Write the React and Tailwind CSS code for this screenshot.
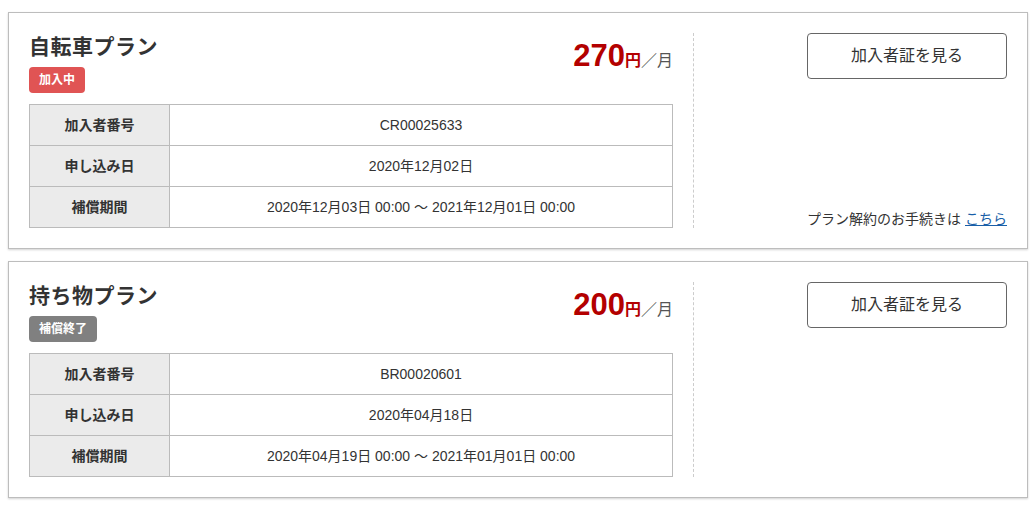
import React from "react";

const plans = [
  {
    name: "自転車プラン",
    status: "加入中",
    active: true,
    price: "270",
    number: "CR00025633",
    applied: "2020年12月02日",
    period: "2020年12月03日 00:00 〜 2021年12月01日 00:00",
  },
  {
    name: "持ち物プラン",
    status: "補償終了",
    active: false,
    price: "200",
    number: "BR00020601",
    applied: "2020年04月18日",
    period: "2020年04月19日 00:00 〜 2021年01月01日 00:00",
  },
];

const Row = ({ label, value, last }) => (
  <div className={`flex ${last ? "h-[40px]" : "h-[41px] border-b border-[#bbbbbb]"}`}>
    <div className="w-[140px] shrink-0 bg-[#ebebeb] border-r border-[#bbbbbb] flex items-center justify-center text-[14px] font-bold text-[#333]">
      {label}
    </div>
    <div className="flex-1 flex items-center justify-center text-[14px] text-[#333]">
      {value}
    </div>
  </div>
);

const PlanCard = ({ plan }) => (
  <div className="bg-white border border-[#bdbdbd] shadow-[0_1px_2px_rgba(0,0,0,0.18)] px-5 py-5 flex">
    {/* Left */}
    <div className="w-[644px] shrink-0">
      <div className="flex justify-between">
        <div>
          <h2 className="text-[21px] font-bold text-[#333] leading-[28px] tracking-[0.5px]">
            {plan.name}
          </h2>
          <span
            className={`inline-block mt-[6px] h-[26px] leading-[26px] px-[10px] rounded-[4px] text-white text-[12px] font-bold ${
              plan.active ? "bg-[#e05454]" : "bg-[#808080]"
            }`}
          >
            {plan.status}
          </span>
        </div>
        <div className="mt-[6px] flex items-baseline h-[34px]">
          <span className="text-[31px] font-bold text-[#b30000] leading-[34px] font-['Liberation_Sans',sans-serif]">
            {plan.price}
          </span>
          <span className="text-[16px] font-bold text-[#b30000]">円</span>
          <span className="text-[16px] text-[#555]">／月</span>
        </div>
      </div>
      <div className="mt-[11px] border border-[#bbbbbb]">
        <Row label="加入者番号" value={plan.number} />
        <Row label="申し込み日" value={plan.applied} />
        <Row label="補償期間" value={plan.period} last />
      </div>
    </div>

    {/* Right */}
    <div className="ml-5 flex-1 border-l border-dashed border-[#cccccc] flex flex-col items-end justify-between">
      <button className="w-[200px] h-[46px] border border-[#666] rounded-[4px] text-[16px] text-[#333] bg-white">
        加入者証を見る
      </button>
      {plan.active && (
        <p className="text-[14px] text-[#333] leading-[18px]">
          プラン解約のお手続きは{" "}
          <a href="#" className="text-[#1a5fa8] underline">
            こちら
          </a>
        </p>
      )}
    </div>
  </div>
);

export default function App() {
  return (
    <div className="min-h-screen bg-white px-2 pt-3 font-['Liberation_Sans','Noto_Sans_CJK_JP',sans-serif]">
      <div className="flex flex-col gap-[12px] w-[1020px]">
        {plans.map((p) => (
          <PlanCard key={p.name} plan={p} />
        ))}
      </div>
    </div>
  );
}
